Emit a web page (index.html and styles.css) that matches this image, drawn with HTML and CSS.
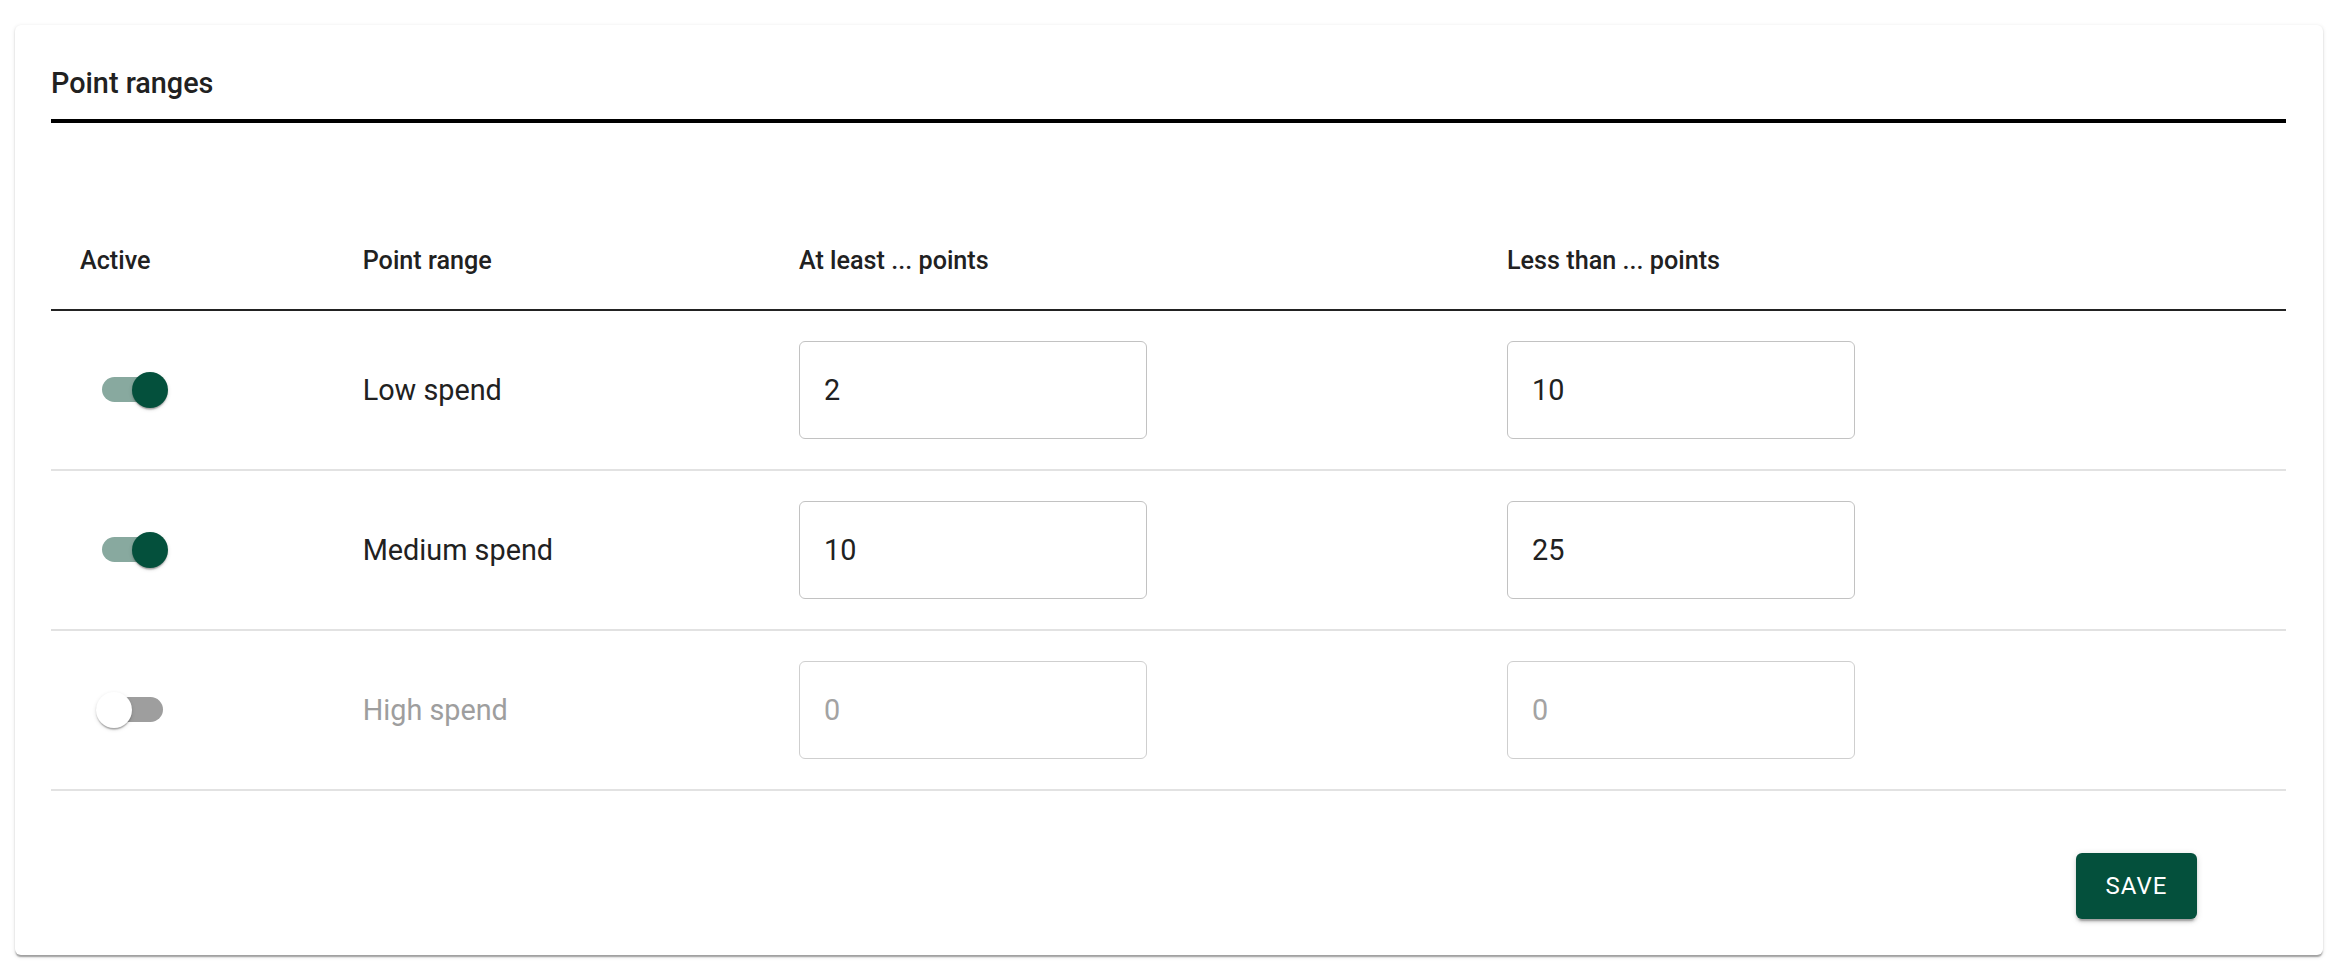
FILE: index.html
```html
<!DOCTYPE html>
<html lang="en">
<head>
<meta charset="utf-8">
<title>Point ranges</title>
<link rel="stylesheet" href="styles.css">
</head>
<body>
<div class="page">
  <section class="card">
    <h2 class="title">Point ranges</h2>
    <div class="table">
      <div class="row head">
        <div class="cell first-head">Active</div>
        <div class="cell">Point range</div>
        <div class="cell">At least ... points</div>
        <div class="cell">Less than ... points</div>
      </div>
      <div class="row body-row">
        <div class="cell first"><span class="switch on"><span class="track"></span><span class="thumb"></span></span></div>
        <div class="cell label">Low spend</div>
        <div class="cell"><input class="field" type="text" value="2"></div>
        <div class="cell"><input class="field" type="text" value="10"></div>
      </div>
      <div class="row body-row">
        <div class="cell first"><span class="switch on"><span class="track"></span><span class="thumb"></span></span></div>
        <div class="cell label">Medium spend</div>
        <div class="cell"><input class="field" type="text" value="10"></div>
        <div class="cell"><input class="field" type="text" value="25"></div>
      </div>
      <div class="row body-row disabled">
        <div class="cell first"><span class="switch off"><span class="track"></span><span class="thumb"></span></span></div>
        <div class="cell label">High spend</div>
        <div class="cell"><input class="field" type="text" value="0" disabled></div>
        <div class="cell"><input class="field" type="text" value="0" disabled></div>
      </div>
    </div>
    <div class="actions">
      <button class="btn" type="button">SAVE</button>
    </div>
  </section>
</div>
</body>
</html>
```
FILE: styles.css
```css
html, body {
  margin: 0;
  padding: 0;
  background: #ffffff;
}

body {
  font-family: Roboto, "Liberation Sans", Arial, sans-serif;
  color: #212121;
}

.page {
  padding: 25px 15px 12px 15px;
}

.card {
  background: #ffffff;
  border-radius: 6px;
  box-shadow: 0 3px 1.5px -1.5px rgba(0, 0, 0, 0.2),
              0 1.5px 1.5px 0 rgba(0, 0, 0, 0.14),
              0 1.5px 4.5px 0 rgba(0, 0, 0, 0.12);
  padding: 39.5px 37px 36px 36px;
}

.title {
  margin: 0;
  font-size: 28.8px;
  line-height: 36px;
  font-weight: 500;
  color: #212121;
  padding-bottom: 18px;
  border-bottom: 4px solid #000000;
}

.table {
  margin-top: 96px;
}

.row {
  display: grid;
  grid-template-columns: 311.7px 436.3px 708px 1fr;
  align-items: center;
}

.head {
  padding: 24px 0 30px 0;
  border-bottom: 2px solid #222222;
  font-size: 25.2px;
  line-height: 36px;
  font-weight: 500;
  color: #212121;
}

.first-head {
  padding-left: 29px;
}

.body-row {
  height: 158px;
  border-bottom: 2px solid #e2e2e2;
  font-size: 28.8px;
  line-height: 36px;
  color: #212121;
}

.first {
  padding-left: 45px;
}

.label {
  font-weight: 400;
}

.disabled .label {
  color: #9e9e9e;
}

.field {
  display: block;
  box-sizing: border-box;
  width: 348px;
  height: 98px;
  margin: 0;
  padding: 0 24px;
  border: 1px solid #c2c2c2;
  border-radius: 6px;
  background: #ffffff;
  font-family: Roboto, "Liberation Sans", Arial, sans-serif;
  font-size: 28.8px;
  color: #212121;
  outline: none;
}

.field:disabled {
  color: #a3a3a3;
  border-color: #cfcfcf;
  background: #ffffff;
}

.switch {
  position: relative;
  display: block;
  width: 72px;
  height: 36px;
}

.track {
  position: absolute;
  left: 5.5px;
  top: 5.5px;
  width: 61px;
  height: 25px;
  border-radius: 12.5px;
  background: #9e9e9e;
}

.switch.on .track {
  background: #88a99f;
}

.thumb {
  position: absolute;
  top: 0;
  left: 0;
  width: 36px;
  height: 36px;
  border-radius: 50%;
  background: #ffffff;
  box-shadow: 0 3px 1.5px -1.5px rgba(0, 0, 0, 0.2),
              0 1.5px 1.5px 0 rgba(0, 0, 0, 0.14),
              0 1.5px 4.5px 0 rgba(0, 0, 0, 0.12);
}

.switch.on .thumb {
  left: 36px;
  background: #04503c;
}

.actions {
  display: flex;
  justify-content: flex-end;
  margin-top: 62px;
  padding-right: 89px;
}

.btn {
  width: 121px;
  height: 66px;
  border: none;
  border-radius: 6px;
  background: #04503c;
  color: #ffffff;
  font-family: Roboto, "Liberation Sans", Arial, sans-serif;
  font-size: 24px;
  font-weight: 400;
  letter-spacing: 1px;
  padding: 0;
  box-shadow: 0 4.5px 1.5px -3px rgba(0, 0, 0, 0.2),
              0 3px 3px 0 rgba(0, 0, 0, 0.14),
              0 1.5px 7.5px 0 rgba(0, 0, 0, 0.12);
  cursor: pointer;
}
```
